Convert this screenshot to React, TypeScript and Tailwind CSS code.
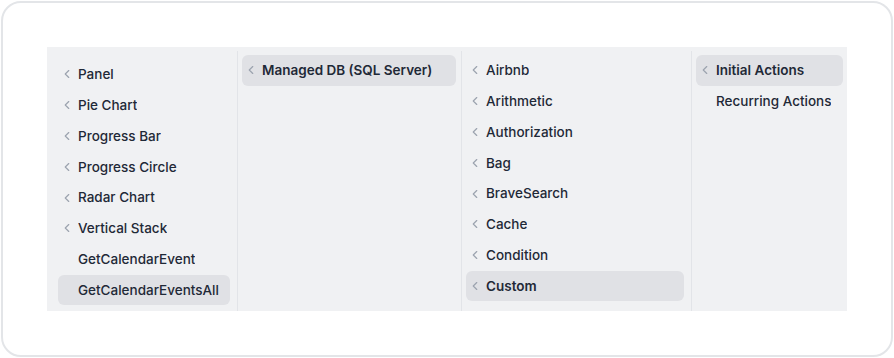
import React from 'react';
import { ChevronLeft } from 'lucide-react';

type Item = { label: string; nested?: boolean; active?: boolean };

const columns: { items: Item[]; className: string }[] = [
  {
    className: 'w-[191px] pt-2 pl-[11px] pr-[7px] border-r',
    items: [
      { label: 'Panel', nested: true },
      { label: 'Pie Chart', nested: true },
      { label: 'Progress Bar', nested: true },
      { label: 'Progress Circle', nested: true },
      { label: 'Radar Chart', nested: true },
      { label: 'Vertical Stack', nested: true },
      { label: 'GetCalendarEvent' },
      { label: 'GetCalendarEventsAll', active: true },
    ],
  },
  {
    className: 'w-[224px] pt-1 pl-1 pr-[5px] border-r',
    items: [{ label: 'Managed DB (SQL Server)', nested: true, active: true }],
  },
  {
    className: 'w-[230px] pt-1 pl-1 pr-[7px] border-r',
    items: [
      { label: 'Airbnb', nested: true },
      { label: 'Arithmetic', nested: true },
      { label: 'Authorization', nested: true },
      { label: 'Bag', nested: true },
      { label: 'BraveSearch', nested: true },
      { label: 'Cache', nested: true },
      { label: 'Condition', nested: true },
      { label: 'Custom', nested: true, active: true },
    ],
  },
  {
    className: 'flex-1 pt-1 pl-1 pr-1',
    items: [
      { label: 'Initial Actions', nested: true, active: true },
      { label: 'Recurring Actions' },
    ],
  },
];

const Row: React.FC<{ item: Item }> = ({ item }) => (
  <div
    className={`flex h-[30.8px] items-center gap-1 rounded-md pl-[2px] text-[13.5px] text-[#1f2937] ${
      item.active ? 'bg-[#e0e1e5]' : ''
    } ${item.active && item.nested ? 'font-semibold' : 'font-medium'}`}
  >
    <span className="flex w-[14px] shrink-0 justify-center">
      {item.nested && <ChevronLeft size={14} strokeWidth={2} className="text-[#9ca3af]" />}
    </span>
    <span className="truncate">{item.label}</span>
  </div>
);

const App: React.FC = () => {
  return (
    <div className="h-[358px] w-[894px] bg-white p-px" style={{ fontFamily: "Inter, 'Noto Sans', sans-serif" }}>
      <div className="h-[356px] w-[892px] rounded-[20px] border-2 border-[#e3e5e8] bg-white p-11">
        <div className="flex h-[264px] w-[800px] bg-[#f0f1f3]">
          {columns.map((col, i) => (
            <div key={i} className={`mt-1 flex flex-col border-[#e2e4e8] ${col.className}`}>
              {col.items.map((item) => (
                <Row key={item.label} item={item} />
              ))}
            </div>
          ))}
        </div>
      </div>
    </div>
  );
};

export default App;
